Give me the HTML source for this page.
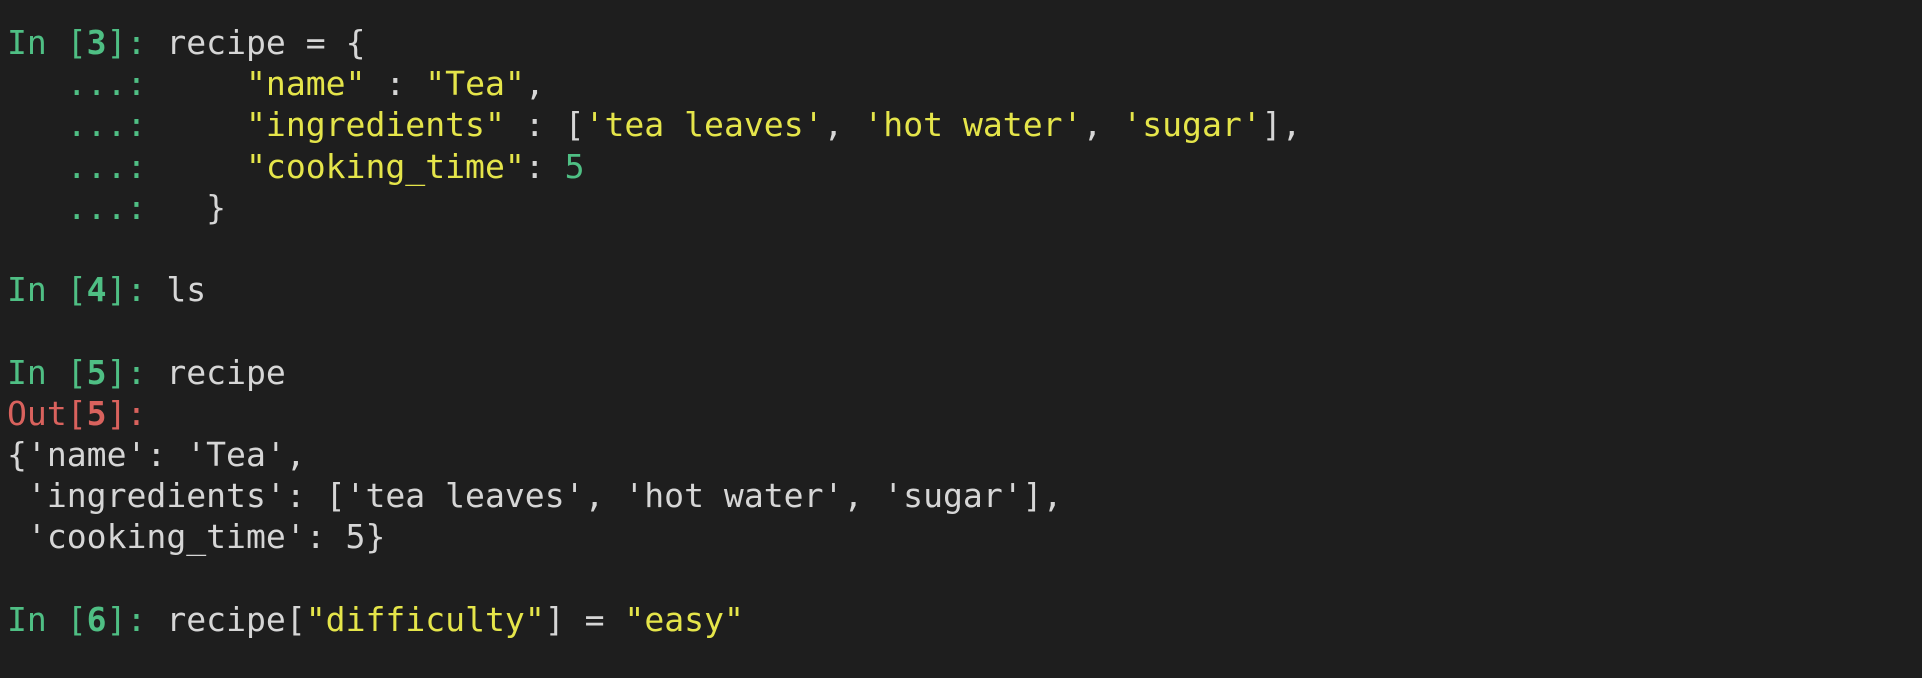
<!DOCTYPE html>
<html><head><meta charset="utf-8"><style>
html,body{margin:0;padding:0;background:#1e1e1e;width:1922px;height:678px;overflow:hidden}
pre{margin:0;position:absolute;left:7px;top:22px;font-family:"DejaVu Sans Mono","Liberation Mono",monospace;font-size:33.1px;line-height:41.2px;color:#d6d6d6}
.g{color:#4fbf84}.b{font-weight:bold}.y{color:#e5e54a}.r{color:#d9625d}
</style></head><body><pre><span class="g">In [<span class="b">3</span>]:</span> recipe = {
<span class="g">   ...:</span>     <span class="y">"name"</span> : <span class="y">"Tea"</span>,
<span class="g">   ...:</span>     <span class="y">"ingredients"</span> : [<span class="y">'tea leaves'</span>, <span class="y">'hot water'</span>, <span class="y">'sugar'</span>],
<span class="g">   ...:</span>     <span class="y">"cooking_time"</span>: <span class="g">5</span>
<span class="g">   ...:</span>   }

<span class="g">In [<span class="b">4</span>]:</span> ls

<span class="g">In [<span class="b">5</span>]:</span> recipe
<span class="r">Out[<span class="b">5</span>]:</span>
{'name': 'Tea',
 'ingredients': ['tea leaves', 'hot water', 'sugar'],
 'cooking_time': 5}

<span class="g">In [<span class="b">6</span>]:</span> recipe[<span class="y">"difficulty"</span>] = <span class="y">"easy"</span>
</pre></body></html>
